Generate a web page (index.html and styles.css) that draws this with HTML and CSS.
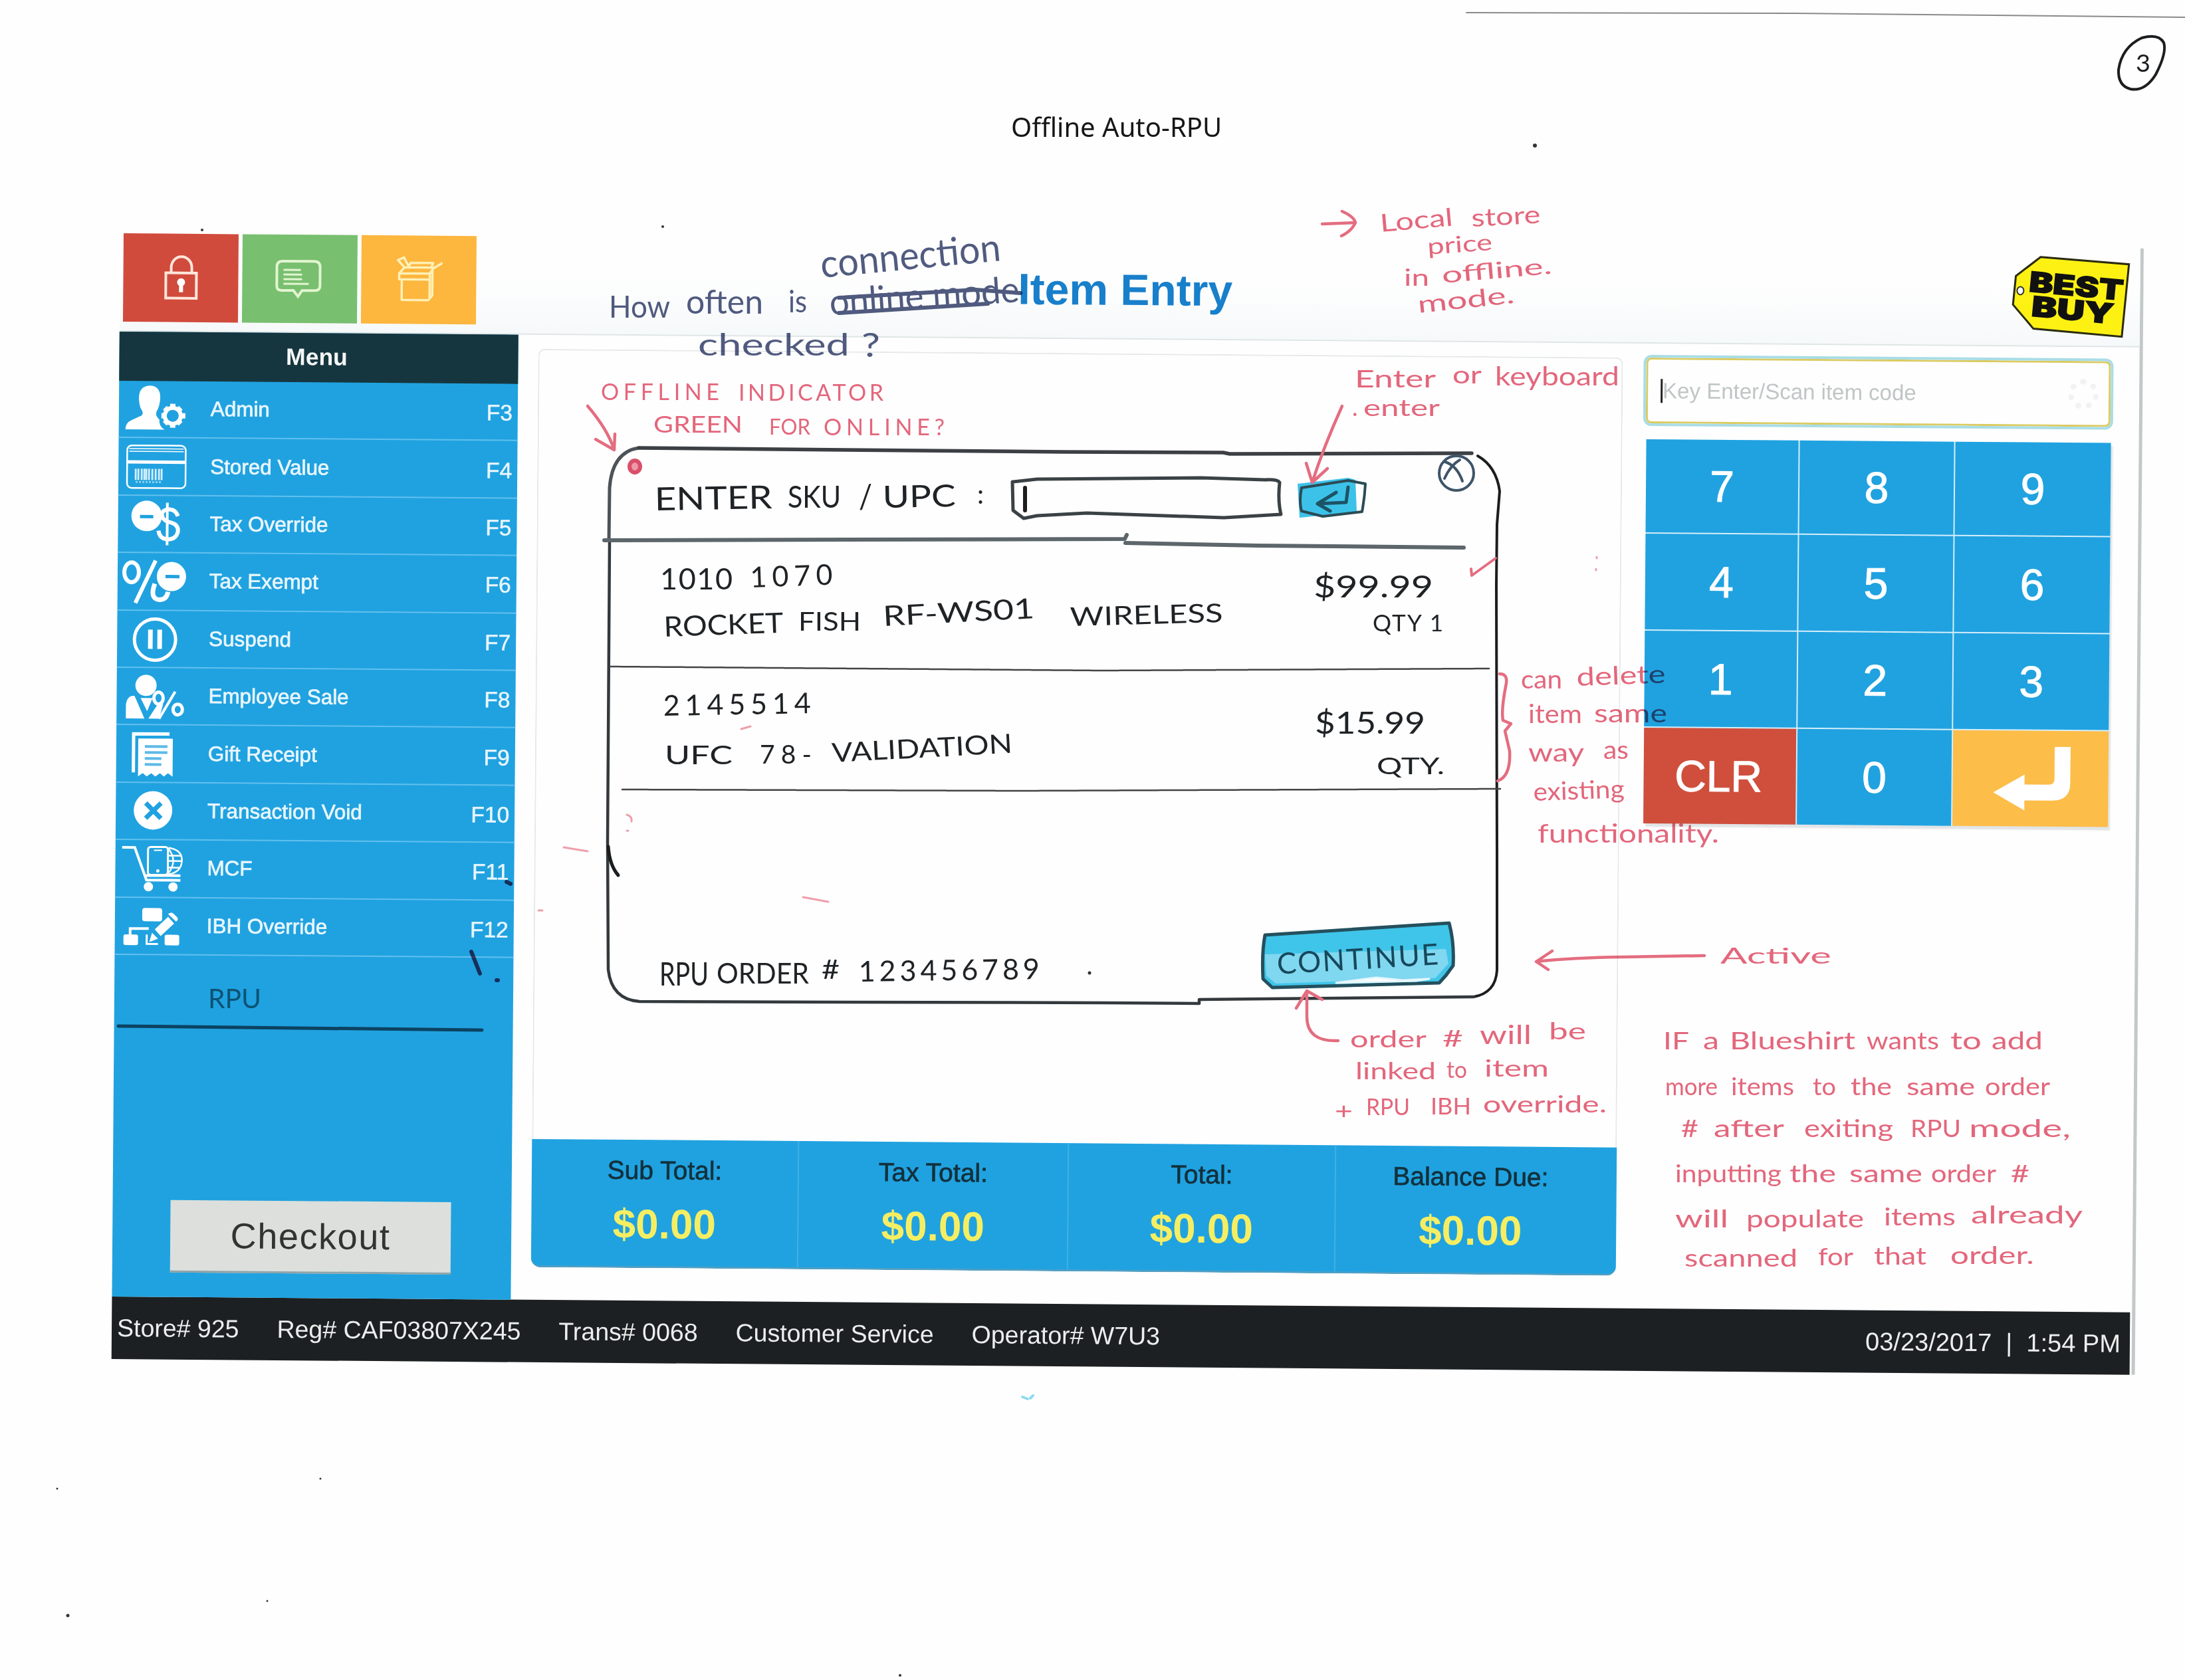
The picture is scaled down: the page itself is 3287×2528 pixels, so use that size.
FILE: index.html
```html
<!DOCTYPE html>
<html lang="en">
<head>
<meta charset="utf-8">
<title>Offline Auto-RPU</title>
<link rel="stylesheet" href="styles.css">
</head>
<body>
<h1 class="doc-title">Offline Auto-RPU</h1>

<div class="app">
  <header class="topbar">
    <nav class="tiles">
      <div class="tile tile-red">
        <svg width="60" height="74" viewBox="0 0 60 74" fill="none" stroke="#fde6da" stroke-width="4"><rect x="7" y="29" width="46" height="38"/><path d="M15 29V21a15 16 0 0 1 31 0v8"/><circle cx="30" cy="43" r="6" fill="#fff" stroke="none"/><path d="M30 44v14" stroke="#fff" stroke-width="6"/></svg>
      </div>
      <div class="tile tile-green">
        <svg width="76" height="64" viewBox="0 0 76 64" fill="none" stroke="#e2f5cf" stroke-width="4"><path d="M12 5h47q9 0 9 9v28q0 7-8 7H41l-6 9-7-9H10q-7 0-7-6V13q0-8 9-8z"/><path d="M13 18h26M13 25h28M13 32h28M13 39h38" stroke-width="3"/></svg>
      </div>
      <div class="tile tile-orange">
        <svg width="76" height="72" viewBox="0 0 76 72" fill="none" stroke="#fff0b4" stroke-width="3.5" stroke-linejoin="round"><path d="M8 35V26l8-9h44l-6 9v9zM12 35v31h40l6-7V20M16 17L6 6l9-4 8 15M22 17l3-7h34l-3 7M54 26v37M58 19l15-9M8 26h46"/></svg>
      </div>
    </nav>
    <h2 class="screen-title">Item Entry</h2>
    <svg class="logo" width="182" height="130" viewBox="0 0 182 130"><path d="M43 2L176 12 166 121 33 110 2 74 6 31z" fill="#fdf114" stroke="#2a2a10" stroke-width="3"/><ellipse cx="13" cy="53" rx="5" ry="6" fill="#fff" stroke="#333" stroke-width="2"/><text class="logo-text" x="25" y="54" textLength="142" lengthAdjust="spacingAndGlyphs" transform="rotate(5 25 54)">BEST</text><text class="logo-text" x="29" y="91" textLength="124" lengthAdjust="spacingAndGlyphs" transform="rotate(5 29 91)">BUY</text></svg>
  </header>

  <div class="body">
    <aside class="sidebar">
      <div class="menu-head">Menu</div>
      <ul class="menu">
        <li><svg class="ico" viewBox="0 0 100 86"><path d="M6 74q0-10 9-14l15-7q3-2 1-7-4-5-5-17-1-20 16-21 17 0 16 20-1 12-5 18-2 5 0 8 2 3 4 5-1 10 8 15z"/><path d="M78 35v36M61 53h36M66 41l24 24M90 41L66 65" stroke="#fff" stroke-width="8" transform="translate(-1)"/><circle cx="77" cy="53" r="15"/><circle cx="77" cy="53" r="9" fill="#20a2e0"/></svg><span>Admin</span><kbd>F3</kbd></li>
        <li><svg class="ico" viewBox="0 0 100 86"><rect x="9" y="11" width="88" height="64" rx="7" fill="none" stroke="#fff" stroke-width="2.5"/><path d="M12 16h82M12 20h82" stroke="#fff" stroke-width="1.5"/><path d="M9 36h88" stroke="#fff" stroke-width="5"/><path d="M22 46v17M26 46v17M31 46v17M35 46v17M38 46v17M42 46v17M47 46v17M52 46v17M57 46v17M61 46v17" stroke="#d5eefb" stroke-width="2.8"/><path d="M22 66h39" stroke="#8fd0f0" stroke-width="3" stroke-dasharray="3 2"/></svg><span>Stored Value</span><kbd>F4</kbd></li>
        <li><svg class="ico" viewBox="0 0 100 86"><path d="M86 31q-4-11-15-10-12 2-8 12 2 5 10 7 15 3 13 15-3 11-15 11-13-1-14-13" fill="none" stroke="#fff" stroke-width="6"/><path d="M70 11v64" stroke="#fff" stroke-width="4"/><circle cx="39" cy="31" r="23"/><path d="M29 32h20" stroke="#20a2e0" stroke-width="5"/></svg><span>Tax Override</span><kbd>F5</kbd></li>
        <li><svg class="ico" viewBox="0 0 100 86"><ellipse cx="17" cy="30" rx="11" ry="15" fill="none" stroke="#fff" stroke-width="6"/><path d="M53 12L23 76" stroke="#fff" stroke-width="6"/><path d="M52 47q-8 23 7 24 11 0 13-12" fill="none" stroke="#fff" stroke-width="7"/><circle cx="77" cy="36" r="22"/><path d="M68 36h21" stroke="#20a2e0" stroke-width="5"/></svg><span>Tax Exempt</span><kbd>F6</kbd></li>
        <li><svg class="ico" viewBox="0 0 100 86"><circle cx="53" cy="44" r="31" fill="none" stroke="#fff" stroke-width="5"/><path d="M46 29v29M60 29v29" stroke="#fff" stroke-width="7"/></svg><span>Suspend</span><kbd>F7</kbd></li>
        <li><svg class="ico" viewBox="0 0 100 86"><circle cx="40" cy="27" r="16"/><path d="M10 77V56q2-14 13-13l15 34zM32 46h18l-8 20zM44 77l14-22h8l-6 22z"/><path d="M84 36L60 77" stroke="#fff" stroke-width="4"/><ellipse cx="59" cy="46" rx="7" ry="9" fill="#20a2e0" stroke="#fff" stroke-width="5"/><ellipse cx="88" cy="63" rx="7" ry="8" fill="none" stroke="#fff" stroke-width="5"/></svg><span>Employee Sale</span><kbd>F8</kbd></li>
        <li><svg class="ico" viewBox="0 0 100 86"><path d="M22 71V13h54" fill="none" stroke="#fff" stroke-width="5"/><path d="M29 20h52v57l-7-5-6 5-6-5-7 5-6-5-7 5-6-5-7 5z"/><path d="M39 32h34M39 41h34M39 50h25M39 59h25" stroke="#5cb9e8" stroke-width="4"/></svg><span>Gift Receipt</span><kbd>F9</kbd></li>
        <li><svg class="ico" viewBox="0 0 100 86"><circle cx="52" cy="42" r="29"/><path d="M41 31l23 23M64 31L41 54" stroke="#20a2e0" stroke-width="7"/></svg><span>Transaction Void</span><kbd>F10</kbd></li>
        <li><svg class="ico" viewBox="0 0 100 86"><path d="M6 12h19l18 49h51M40 54h54" fill="none" stroke="#fff" stroke-width="4"/><rect x="45" y="11" width="30" height="42" rx="4" fill="none" stroke="#fff" stroke-width="3"/><path d="M76 12q21 3 20 20-1 17-20 20M76 24h18M76 32h20M76 42h17M76 14q14 18 0 36" fill="none" stroke="#fff" stroke-width="2.5"/><path d="M54 16h12" stroke="#fff" stroke-width="2"/><circle cx="60" cy="47" r="2.5"/><circle cx="46" cy="71" r="7"/><circle cx="83" cy="71" r="7"/></svg><span>MCF</span><kbd>F11</kbd></li>
        <li><svg class="ico" viewBox="0 0 100 86"><rect x="37" y="16" width="30" height="20" rx="4"/><path d="M19 58V47h28" fill="none" stroke="#fff" stroke-width="4"/><rect x="9" y="56" width="22" height="16" rx="3"/><rect x="71" y="56" width="22" height="16" rx="3"/><path d="M56 48l20-19 9 10-20 19zM76 25q5-5 9 0l5 5q2 4-2 6zM48 67l4-14 9 9z"/><path d="M44 56v14h17" fill="none" stroke="#fff" stroke-width="3"/></svg><span>IBH Override</span><kbd>F12</kbd></li>
      </ul>
      <button class="checkout">Checkout</button>
    </aside>

    <main class="cart">
      <div class="items"></div>
      <div class="totals">
        <div class="total"><span>Sub Total:</span><b>$0.00</b></div>
        <div class="total"><span>Tax Total:</span><b>$0.00</b></div>
        <div class="total"><span>Total:</span><b>$0.00</b></div>
        <div class="total"><span>Balance Due:</span><b>$0.00</b></div>
      </div>
    </main>

    <section class="entry">
      <div class="field"><i class="caret"></i><span>Key Enter/Scan item code</span><i class="spinner"></i></div>
      <div class="keypad">
        <div>7</div><div>8</div><div>9</div>
        <div>4</div><div>5</div><div>6</div>
        <div>1</div><div>2</div><div>3</div>
        <div class="clr">CLR</div><div>0</div>
        <div class="enter"><svg width="118" height="98" viewBox="0 0 118 98"><path d="M94 2h24v54q0 26-26 27H49v15L2 71l47-27v15h36q9 0 9-9z" fill="#fff"/></svg></div>
      </div>
    </section>
  </div>

  <footer class="status">
    <span>Store# 925</span><span>Reg# CAF03807X245</span><span>Trans# 0068</span><span>Customer Service</span><span>Operator# W7U3</span>
    <span class="clock">03/23/2017 &nbsp;|&nbsp; 1:54 PM</span>
  </footer>
</div>

<!-- Pen notes and the sketched dialog lie over the screen -->
<svg class="ink" width="3287" height="2528" viewBox="0 0 3287 2528">
  <!-- page edge, page number, specks -->
  <path d="M2206 19L2700 20 3287 26" stroke="#8b8b8b" stroke-width="2"/>
  <g class="pen">
    <path d="M3222 57q-30 14-35 48-1 24 18 29 22 4 38-22 17-33 12-48-8-14-33-7" stroke-width="4"/>
    <text x="3213" y="108" font-size="36" textLength="22" lengthAdjust="spacingAndGlyphs">3</text>
  </g>
  <g fill="#333"><circle cx="2309" cy="219" r="3"/><circle cx="102" cy="2431" r="2.5"/><circle cx="304" cy="346" r="2"/><circle cx="482" cy="2225" r="1.5"/><circle cx="86" cy="2240" r="1.5"/><circle cx="1354" cy="2521" r="2"/><circle cx="402" cy="2409" r="1.5"/><circle cx="1639" cy="1464" r="2.5"/><circle cx="997" cy="341" r="2"/></g>
  <path d="M1538 2102l8 3M1550 2104l4-4" stroke="#8edcf0" stroke-width="4"/>

  <!-- dialog sketch -->
  <g class="pen">
    <path d="M961 674q-40 6-44 60l-1 80" stroke="#4d5358" stroke-width="5"/>
    <path d="M961 674L1600 680 1840 681 1850 683 2214 682" stroke-width="5.5" stroke="#3c4044"/>
    <path d="M2223 686q28 16 33 53l-4 50-1 91 1 400v180q-2 34-35 40" stroke-width="4"/>
    <path d="M2217 1500L1804 1504v6l-144-1-698-2q-42-3-47-48l-1-194 3-451" stroke-width="4.5" stroke="#33393d"/>
    <path d="M915 1274q2 28 15 43" stroke-width="5"/>
    <path d="M909 813l783-2 3-6M1693 817l200 4 309 3" stroke="#5c666b" stroke-width="6"/>
    <path d="M918 1003l742 6 580-3M936 1188l600 2 721-3" stroke="#444" stroke-width="2.5" stroke-dasharray="7 1 3 1"/>
    <path d="M1523 725l1 43 16 12 20-4 75-4 206 7 86-5q-5-20-2-48-3-5-22-4l-96-3-247 2z" stroke="#3b4246" stroke-width="5"/>
    <path d="M1542 734v34" stroke-width="6"/>
    <path d="M1952 728l76-9 11 3 2 48-86 9z" fill="#3cc3ea" stroke="none"/>
    <path d="M1958 734l70-11 26 5q-1 20-5 42l-59 7-32-8q-4-15 0-35" stroke="#2b4b55" stroke-width="4"/>
    <path d="M2028 733l-3 23-43 2 28-17M1982 758l19 11" stroke="#1c5365" stroke-width="5"/>
    <g stroke="#3f5468" stroke-width="4"><ellipse cx="2191" cy="712" rx="26" ry="26"/><path d="M2174 695q18 6 26 29M2196 692q-14 8-23 28"/></g>
    <path d="M1903 1407l277-18q8 30 6 64l-11 15-10 11-251 7-14-13q-2-40 3-66z" fill="#3fc6ea" stroke="#24505e" stroke-width="5"/>
    <path d="M1903 1436l272-8 4 22-20 22-240 8-14-12z" fill="#b8e8f6" opacity=".55" stroke="none"/>
    <path d="M2010 1479l60-8 40 4 40-2-20 3z" fill="#fff" stroke="#e6f8fd" stroke-width="3"/>
  </g>
  <g class="pen-text">
    <text x="985" y="768" font-size="48" textLength="177" lengthAdjust="spacingAndGlyphs" transform="rotate(-1 985 768)">ENTER</text>
    <text x="1185" y="764" font-size="46" textLength="80" lengthAdjust="spacingAndGlyphs">SKU</text>
    <text x="1292" y="765" font-size="50" textLength="20" lengthAdjust="spacingAndGlyphs">/</text>
    <text x="1328" y="764" font-size="46" textLength="110" lengthAdjust="spacingAndGlyphs" transform="rotate(-1 1328 764)">UPC</text>
    <text x="1470" y="758" font-size="40">:</text>
    <text x="993" y="887" font-size="45" textLength="109">1010</text>
    <text x="1129" y="884" font-size="43" textLength="124" transform="rotate(-2 1129 884)">1070</text>
    <text x="999" y="958" font-size="42" textLength="180" lengthAdjust="spacingAndGlyphs" transform="rotate(-2 999 958)">ROCKET</text>
    <text x="1201" y="949" font-size="38" textLength="94" lengthAdjust="spacingAndGlyphs">FISH</text>
    <text x="1329" y="942" font-size="42" textLength="228" lengthAdjust="spacingAndGlyphs" transform="rotate(-3 1329 942)">RF-WS01</text>
    <text x="1610" y="942" font-size="39" textLength="230" lengthAdjust="spacingAndGlyphs" transform="rotate(-1.5 1610 942)">WIRELESS</text>
    <text x="1976" y="899" font-size="47" textLength="180" lengthAdjust="spacingAndGlyphs">$99.99</text>
    <text x="2065" y="950" font-size="35" textLength="106">QTY 1</text>
    <text x="998" y="1077" font-size="43" textLength="222" transform="rotate(-1 998 1077)">2145514</text>
    <text x="1000" y="1150" font-size="39" textLength="102" lengthAdjust="spacingAndGlyphs">UFC</text>
    <text x="1143" y="1149" font-size="39" textLength="78">78-</text>
    <text x="1252" y="1147" font-size="40" textLength="272" lengthAdjust="spacingAndGlyphs" transform="rotate(-3 1252 1147)">VALIDATION</text>
    <text x="1978" y="1104" font-size="46" textLength="166" lengthAdjust="spacingAndGlyphs">$15.99</text>
    <text x="2071" y="1165" font-size="35" textLength="102" lengthAdjust="spacingAndGlyphs">QTY.</text>
    <text x="992" y="1483" font-size="48" textLength="74" lengthAdjust="spacingAndGlyphs">RPU</text>
    <text x="1078" y="1480" font-size="43" textLength="139" lengthAdjust="spacingAndGlyphs">ORDER</text>
    <text x="1236" y="1473" font-size="40" textLength="27" lengthAdjust="spacingAndGlyphs">#</text>
    <text x="1292" y="1477" font-size="43" textLength="272" transform="rotate(-.8 1292 1477)">123456789</text>
    <text x="1922" y="1466" font-size="44" textLength="243" fill="#16485c" transform="rotate(-3.5 1922 1466)">CONTINUE</text>
  </g>

  <!-- menu addition -->
  <path d="M178 1544l547 6" stroke="#54696e" stroke-width="5"/>
  <path d="M709 1432l13 33M747 1475h2M762 1327l6 3" stroke="#b04a68" stroke-width="6"/>
  <text class="note" x="313" y="1517" font-size="40" textLength="80" lengthAdjust="spacingAndGlyphs" fill="#5d8284">RPU</text>

  <!-- blue ink question -->
  <g class="note" fill="#515b80">
    <text x="1236" y="418" font-size="58" textLength="272" lengthAdjust="spacingAndGlyphs" transform="rotate(-5.5 1236 418)">connection</text>
    <text x="916" y="478" font-size="46" textLength="92" lengthAdjust="spacingAndGlyphs">How</text>
    <text x="1032" y="472" font-size="50" textLength="116" lengthAdjust="spacingAndGlyphs">often</text>
    <text x="1186" y="470" font-size="46" textLength="28" lengthAdjust="spacingAndGlyphs">is</text>
    <text x="1249" y="474" font-size="54" textLength="286" lengthAdjust="spacingAndGlyphs" transform="rotate(-4 1249 474)">online mode</text>
    <text x="1050" y="535" font-size="47" textLength="228" lengthAdjust="spacingAndGlyphs">checked</text>
    <text x="1296" y="537" font-size="50" textLength="28" lengthAdjust="spacingAndGlyphs">?</text>
  </g>
  <path d="M1262 448l206-12 67 5M1262 471l224-14" stroke="#515b80" stroke-width="6"/>

  <!-- red ink -->
  <g stroke="#e56d80" stroke-width="4.5">
    <path d="M884 611q30 35 40 66M896 661l28 16 1-24"/>
    <path d="M1989 337l50-2M2019 318q18 8 20 17-5 12-21 20"/>
    <path d="M2019 611q-28 62-45 115M1965 697l9 29 23-21"/>
    <path d="M2564 1438l-120 2q-80 1-133 7M2335 1431l-24 16 18 12"/>
    <path d="M1966 1491v39q0 38 47 36M1950 1517l16-26 23 13"/>
    <path d="M2256 1014q12 0 10 14-8 40-5 56l12 5-9 11 7 30q2 38-18 45"/>
    <path d="M2214 866l36-26M2213 856l1 10" stroke-width="4"/>
    <path d="M848 1275l36 6M943 1250h2M943 1226q8 2 7 10M1208 1350l38 7M2402 838v2M2401 856v2M810 1370h6M1115 1097l14-4" stroke="#f0a0ac" stroke-width="3"/>
    <ellipse cx="955" cy="702" rx="8" ry="9" fill="#ee9aa8" stroke="#db4f69" stroke-width="6"/>
  </g>
  <g class="note red">
    <g font-size="34">
      <text x="904" y="602" textLength="178">OFFLINE</text><text x="1111" y="603" textLength="218">INDICATOR</text>
      <text x="983" y="651" textLength="134" lengthAdjust="spacingAndGlyphs">GREEN</text><text x="1157" y="654" font-size="32" textLength="62" lengthAdjust="spacingAndGlyphs">FOR</text><text x="1239" y="655" textLength="182">ONLINE?</text>
    </g>
    <g font-size="37">
      <text x="2077" y="349" textLength="110" lengthAdjust="spacingAndGlyphs" transform="rotate(-5 2077 349)">Local</text><text x="2214" y="341" textLength="104" lengthAdjust="spacingAndGlyphs" transform="rotate(-3 2214 341)">store</text>
      <text x="2148" y="383" font-size="34" textLength="98" lengthAdjust="spacingAndGlyphs" transform="rotate(-4 2148 383)">price</text>
      <text x="2112" y="430" font-size="34" textLength="38" lengthAdjust="spacingAndGlyphs">in</text><text x="2170" y="426" font-size="34" textLength="166" lengthAdjust="spacingAndGlyphs" transform="rotate(-5 2170 426)">offline.</text>
      <text x="2134" y="471" font-size="36" textLength="146" lengthAdjust="spacingAndGlyphs" transform="rotate(-6 2134 471)">mode.</text>
    </g>
    <g font-size="36">
      <text x="2038" y="583" textLength="122" lengthAdjust="spacingAndGlyphs">Enter</text><text x="2185" y="577" textLength="44" lengthAdjust="spacingAndGlyphs">or</text><text x="2249" y="580" font-size="38" textLength="187" lengthAdjust="spacingAndGlyphs">keyboard</text>
      <text x="2034" y="626">.</text><text x="2051" y="626" font-size="34" textLength="115" lengthAdjust="spacingAndGlyphs">enter</text>
    </g>
    <g font-size="38">
      <text x="2288" y="1036" textLength="62" lengthAdjust="spacingAndGlyphs">can</text><text x="2372" y="1032" textLength="134" lengthAdjust="spacingAndGlyphs" transform="rotate(-2 2372 1032)">delete</text>
      <text x="2299" y="1088" textLength="81" lengthAdjust="spacingAndGlyphs">item</text><text x="2398" y="1087" textLength="110" lengthAdjust="spacingAndGlyphs">same</text>
      <text x="2299" y="1146" textLength="84" lengthAdjust="spacingAndGlyphs">way</text><text x="2412" y="1142" textLength="38" lengthAdjust="spacingAndGlyphs">as</text>
      <text x="2307" y="1205" textLength="137" lengthAdjust="spacingAndGlyphs" transform="rotate(-2 2307 1205)">existing</text>
      <text x="2313" y="1268" textLength="273" lengthAdjust="spacingAndGlyphs">functionality.</text>
      <text x="2588" y="1450" font-size="32" textLength="167" lengthAdjust="spacingAndGlyphs">Active</text>
    </g>
    <g font-size="35">
      <text x="2031" y="1576" textLength="115" lengthAdjust="spacingAndGlyphs">order</text><text x="2170" y="1575" textLength="31" lengthAdjust="spacingAndGlyphs">#</text><text x="2226" y="1571" font-size="38" textLength="78" lengthAdjust="spacingAndGlyphs">will</text><text x="2330" y="1564" textLength="56" lengthAdjust="spacingAndGlyphs">be</text>
      <text x="2039" y="1624" textLength="121" lengthAdjust="spacingAndGlyphs">linked</text><text x="2176" y="1622" textLength="31" lengthAdjust="spacingAndGlyphs">to</text><text x="2233" y="1620" textLength="97" lengthAdjust="spacingAndGlyphs">item</text>
      <text x="2008" y="1684" textLength="27" lengthAdjust="spacingAndGlyphs">+</text><text x="2055" y="1678" textLength="66" lengthAdjust="spacingAndGlyphs">RPU</text><text x="2152" y="1677" textLength="61" lengthAdjust="spacingAndGlyphs">IBH</text><text x="2231" y="1674" textLength="186" lengthAdjust="spacingAndGlyphs">override.</text>
    </g>
    <g font-size="36">
      <text x="2502" y="1579" textLength="39" lengthAdjust="spacingAndGlyphs">IF</text><text x="2562" y="1579" textLength="24" lengthAdjust="spacingAndGlyphs">a</text><text x="2602" y="1579" textLength="189" lengthAdjust="spacingAndGlyphs">Blueshirt</text><text x="2808" y="1579" textLength="109" lengthAdjust="spacingAndGlyphs">wants</text><text x="2934" y="1579" textLength="47" lengthAdjust="spacingAndGlyphs">to</text><text x="2996" y="1579" textLength="77" lengthAdjust="spacingAndGlyphs">add</text>
      <text x="2505" y="1648" textLength="79" lengthAdjust="spacingAndGlyphs">more</text><text x="2604" y="1648" textLength="95" lengthAdjust="spacingAndGlyphs">items</text><text x="2727" y="1648" textLength="35" lengthAdjust="spacingAndGlyphs">to</text><text x="2784" y="1648" textLength="62" lengthAdjust="spacingAndGlyphs">the</text><text x="2868" y="1648" textLength="103" lengthAdjust="spacingAndGlyphs">same</text><text x="2986" y="1648" textLength="98" lengthAdjust="spacingAndGlyphs">order</text>
      <text x="2529" y="1711" textLength="26" lengthAdjust="spacingAndGlyphs">#</text><text x="2578" y="1711" textLength="106" lengthAdjust="spacingAndGlyphs">after</text><text x="2714" y="1711" textLength="134" lengthAdjust="spacingAndGlyphs">exiting</text><text x="2874" y="1711" textLength="76" lengthAdjust="spacingAndGlyphs">RPU</text><text x="2962" y="1711" textLength="153" lengthAdjust="spacingAndGlyphs">mode,</text>
      <text x="2520" y="1779" textLength="160" lengthAdjust="spacingAndGlyphs">inputting</text><text x="2692" y="1779" textLength="70" lengthAdjust="spacingAndGlyphs">the</text><text x="2782" y="1779" textLength="110" lengthAdjust="spacingAndGlyphs">same</text><text x="2905" y="1779" textLength="98" lengthAdjust="spacingAndGlyphs">order</text><text x="3025" y="1779" textLength="28" lengthAdjust="spacingAndGlyphs">#</text>
      <text x="2520" y="1847" textLength="80" lengthAdjust="spacingAndGlyphs">will</text><text x="2627" y="1847" textLength="177" lengthAdjust="spacingAndGlyphs">populate</text><text x="2834" y="1844" textLength="108" lengthAdjust="spacingAndGlyphs">items</text><text x="2965" y="1841" textLength="168" lengthAdjust="spacingAndGlyphs">already</text>
      <text x="2534" y="1906" textLength="170" lengthAdjust="spacingAndGlyphs">scanned</text><text x="2735" y="1904" textLength="53" lengthAdjust="spacingAndGlyphs">for</text><text x="2819" y="1903" textLength="79" lengthAdjust="spacingAndGlyphs">that</text><text x="2934" y="1902" textLength="126" lengthAdjust="spacingAndGlyphs">order.</text>
    </g>
  </g>
</svg>
</body>
</html>
```
FILE: styles.css
```css
* { box-sizing: border-box; }
body {
  position: relative;
  margin: 0;
  width: 3287px;
  height: 2528px;
  overflow: hidden;
  background: #fefefe;
  font-family: "Liberation Sans", Arial, sans-serif;
}
.doc-title {
  margin: 0;
  height: 350px;
  padding: 164px 0 0 1521px;
  font: 400 40px/54px "Noto Sans", sans-serif;
  color: #161616;
}

/* The printed screen sits slightly rotated on the sheet */
.app {
  width: 3044px;
  margin-left: 181px;
  border-right: 5px solid #c3c8c8;
  transform: rotate(0.45deg);
  transform-origin: 0 0;
}
.topbar {
  display: flex;
  align-items: center;
  height: 149px;
  border-bottom: 2px solid #dfe6e6;
  background: linear-gradient(#fefefe 40%, #f6f9fa);
}
.tiles { display: flex; gap: 6px; margin-left: 5px; align-self: flex-start; padding-top: 1px; }
.tile { display: flex; align-items: center; justify-content: center; width: 173px; height: 133px; }
.tile-red { background: #d14b3d; }
.tile-green { background: #78bf70; }
.tile-orange { background: #fdb63e; }
.screen-title { margin: 0 0 0 815px; font-size: 66px; color: #187fcb; }
.logo { margin: 12px 11px 0 auto; align-self: flex-start; overflow: visible; }
.logo-text { font: 900 42px Inter, sans-serif; fill: #111; stroke: #111; stroke-width: 1.5px; }

.body { display: flex; height: 1452px; }
.sidebar { display: flex; flex-direction: column; width: 600px; padding-bottom: 37px; background: #20a2e0; }
.menu-head {
  height: 74px;
  line-height: 72px;
  text-align: center;
  background: #16363f;
  color: #f4f6f6;
  font-size: 35.5px;
  font-weight: 700;
  padding-right: 6px;
}
.menu { margin: 0; padding: 0; list-style: none; }
.menu li {
  display: flex;
  align-items: center;
  height: 86.4px;
  padding: 0 8px 0 4px;
  border-bottom: 2px solid #62c0ee;
  color: #e9f6fd;
  font-size: 31.4px;
}
.menu span { margin-left: 34px; -webkit-text-stroke: 0.7px #e9f6fd; }
.menu kbd { margin-left: auto; padding-top: 4px; font: 33.5px "Liberation Sans", Arial, sans-serif; -webkit-text-stroke: 0.5px #e9f6fd; }
.ico { width: 100px; height: 86px; fill: #fff; flex: none; }
.checkout {
  width: 422px;
  height: 109px;
  margin: auto 0 0 87px;
  padding: 0;
  border: 0;
  border-bottom: 3px solid #8fa4aa;
  background: #dcdfdb;
  color: #333;
  font: 54px "Liberation Sans", Arial, sans-serif;
  letter-spacing: 1.6px;
}

.cart {
  display: flex;
  flex-direction: column;
  width: 1632px;
  height: 1382px;
  margin: 21px 0 0 30px;
}
.items { flex: 1; border: 2px solid #e6e9e9; border-bottom: 0; border-radius: 10px 10px 0 0; }
.totals {
  display: grid;
  grid-template-columns: 400px 406px 402px 424px;
  height: 193px;
  border-bottom: 3px solid #4f9fc4;
  border-radius: 0 0 14px 14px;
  background: #20a2e0;
}
.total { display: flex; flex-direction: column; align-items: center; padding-top: 24px; }
.total + .total { border-left: 2px solid #3fb0e6; }
.total:last-child { padding-right: 17px; }
.total span { font-size: 39px; line-height: 44px; color: #13303c; -webkit-text-stroke: 0.7px #13303c; }
.total b { margin-top: 25px; font-size: 62px; line-height: 68px; color: #f6ee62; }

.entry { width: 707px; margin: 17px 0 0 31px; }
.field {
  display: flex;
  align-items: center;
  height: 107px;
  padding: 0 18px 0 22px;
  border: 4px solid #a9dde6;
  border-radius: 12px;
  box-shadow: inset 0 0 0 3px #dccb62;
  color: #c0c5c5;
  font-size: 33px;
}
.caret { width: 3px; height: 36px; background: #222; }
.spinner { width: 46px; height: 46px; margin-left: auto; border: 9px dotted #f1f3f2; border-radius: 50%; }
.keypad {
  display: grid;
  grid-template-columns: 229px 232px 234px;
  grid-template-rows: 140px 144px 144px 144px;
  gap: 2px;
  width: 699px;
  margin: 20px 0 0 5px;
  background: #d5eefa;
  box-shadow: 3px 5px 2px #e2e4e6;
}
.keypad div {
  display: flex;
  align-items: center;
  justify-content: center;
  background: #20a2e0;
  color: #fff;
  font-size: 66px;
  -webkit-text-stroke: 1px #fff;
}
.keypad .clr { background: #cf4f3c; padding-right: 4px; }
.keypad .enter { background: #fdbd49; padding: 0 0 3px 2px; }

.status {
  display: flex;
  align-items: center;
  gap: 57px;
  width: 3036px;
  height: 94px;
  padding: 0 14px 0 8px;
  background: #1c2022;
  color: #eceeee;
  font-size: 37.5px;
}
.clock { margin-left: auto; font-size: 38px; }

.ink { position: absolute; left: 0; top: 0; fill: none; mix-blend-mode: multiply; stroke-linecap: round; stroke-linejoin: round; }
.pen { stroke: #1b1d1f; }
.pen text { fill: #1b1d1f; stroke: none; font-family: Lato, sans-serif; }
.pen-text { fill: #202326; font-family: Lato, sans-serif; }
.note { font-family: Lato, sans-serif; }
.red { fill: #e4677c; }
```
